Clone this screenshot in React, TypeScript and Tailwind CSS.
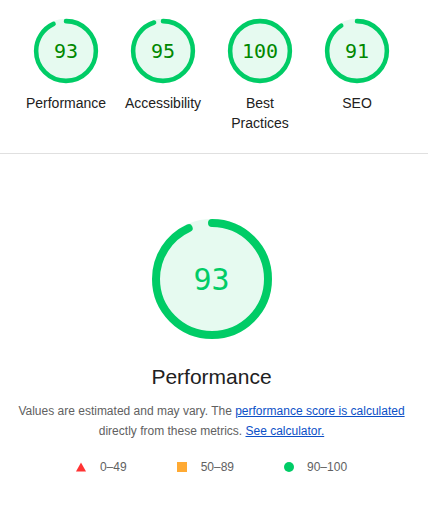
import React from "react";

const C = 2 * Math.PI * 56;

function Gauge({ score, size, sw, numClass }: { score: number; size: number; sw: number; numClass: string }) {
  const frac = score / 100;
  return (
    <div className="relative" style={{ width: size, height: size }}>
      <svg width={size} height={size} viewBox="0 0 120 120" className="overflow-visible">
        <circle cx="60" cy="60" r="56" fill="#e6faf0" stroke="#e6faf0" strokeWidth={sw} />
        <circle
          cx="60"
          cy="60"
          r="56"
          fill="none"
          stroke="#00cc66"
          strokeWidth={sw}
          strokeLinecap="round"
          strokeDasharray={`${frac * C} ${C}`}
          transform="rotate(-90 60 60)"
        />
      </svg>
      <div
        className={`absolute inset-0 flex items-center justify-center ${numClass}`}
        style={{ fontFamily: '"DejaVu Sans Mono", "Liberation Mono", monospace' }}
      >
        {score}
      </div>
    </div>
  );
}

const cats = [
  { s: 93, l: "Performance" },
  { s: 95, l: "Accessibility" },
  { s: 100, l: "Best Practices" },
  { s: 91, l: "SEO" },
];

export default function App() {
  return (
    <div className="w-[428px] h-[505px] bg-white" style={{ fontFamily: '"Liberation Sans", Arial, sans-serif' }}>
      <div className="w-[423px]">
        <div className="flex justify-center pt-[19px] pb-[20px]">
          {cats.map((c) => (
            <div key={c.l} className="w-[97px] flex flex-col items-center">
              <Gauge score={c.s} size={64} sw={8.5} numClass="text-[20px] text-[#008800]" />
              <div className="mt-[10px] text-[14px] leading-[20px] text-[#212121] text-center px-2">{c.l}</div>
            </div>
          ))}
        </div>
      </div>
      <div className="h-px w-full bg-[#e0e0e0]" />
      <div className="w-[423px] flex flex-col items-center pt-[65px]">
        <Gauge score={93} size={120} sw={8} numClass="text-[30px] text-[#00cc66]" />
        <div className="mt-[26px] text-[21px] leading-[24px] text-[#212121]">Performance</div>
        <p className="mt-[12px] max-w-[400px] text-center text-[12px] leading-[20px] text-[#616161]">
          Values are estimated and may vary. The{" "}
          <a className="text-[#0c50c7] underline">performance score is calculated</a> directly from these metrics.{" "}
          <a className="text-[#0c50c7] underline">See calculator.</a>
        </p>
        <div className="mt-[16px] flex items-center gap-[50px] text-[12px] leading-[20px] text-[#616161]">
          <div className="flex items-center gap-[14px]">
            <svg width="10" height="10" viewBox="0 0 10 10">
              <polygon points="5,0.5 10,9.5 0,9.5" fill="#ff3333" />
            </svg>
            <span>0–49</span>
          </div>
          <div className="flex items-center gap-[14px]">
            <div className="w-[10px] h-[10px] bg-[#ffaa33]" />
            <span>50–89</span>
          </div>
          <div className="flex items-center gap-[13px]">
            <div className="w-[10px] h-[10px] rounded-full bg-[#00cc66]" />
            <span>90–100</span>
          </div>
        </div>
      </div>
    </div>
  );
}
